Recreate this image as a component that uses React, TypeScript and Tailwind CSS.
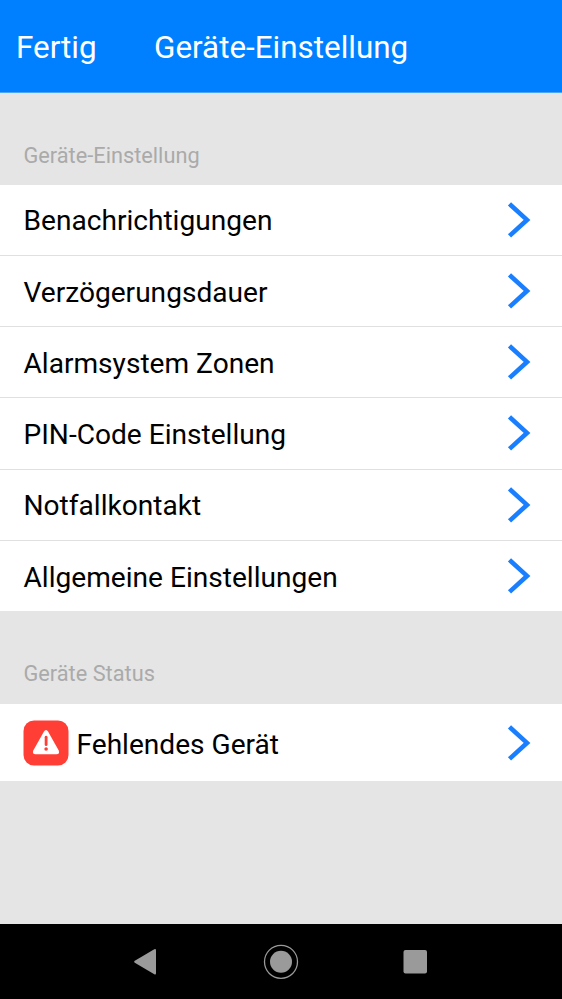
const settings = [
  "Benachrichtigungen",
  "Verzögerungsdauer",
  "Alarmsystem Zonen",
  "PIN-Code Einstellung",
  "Notfallkontakt",
  "Allgemeine Einstellungen",
];

function Chevron() {
  return (
    <svg viewBox="0 0 24 38" className="w-6 h-[38px] shrink-0" fill="none" stroke="#197fff" strokeWidth="4.6">
      <path d="M2.5 2.9 L20 18.9 L2.5 34.9" />
    </svg>
  );
}

function WarningIcon() {
  return (
    <svg viewBox="0 0 46 46" className="w-[46px] h-[46px] shrink-0">
      <rect x="0.5" y="0.5" width="45" height="45" rx="10.5" fill="#ff3f36" />
      <path
        d="M20.8 11.8 Q23 8.4 25.2 11.8 L35.6 30.2 Q37.2 34.2 33.4 34.2 H12.6 Q8.8 34.2 10.4 30.2 Z"
        fill="#fff"
      />
      <path d="M23.1 17.2 V24.7" stroke="#ff3f36" strokeWidth="2.8" strokeLinecap="round" />
      <circle cx="23.1" cy="29" r="1.8" fill="#ff3f36" />
    </svg>
  );
}

export default function App() {
  return (
    <div className="flex flex-col w-full h-[999px] bg-[#e5e5e5] font-['Roboto',sans-serif] overflow-hidden">
      <header className="flex items-center h-[93px] pt-[4px] pl-4 bg-[#0080ff] border-b border-[#4da5f8] text-white text-[31.4px] leading-none shrink-0">
        <button className="w-[138px] text-left">Fertig</button>
        <h1>Geräte-Einstellung</h1>
      </header>

      <main className="flex-1">
        <h2 className="h-[91.5px] pt-[48.5px] pl-[23.5px] text-[21.75px] leading-[28px] text-[#aaaaaa]">Geräte-Einstellung</h2>
        <ul className="bg-white h-[426.5px]">
          {settings.map((label) => (
            <li
              key={label}
              className="flex items-center justify-between h-[71.25px] pl-[23.5px] pr-[31px] border-b border-[#e0e0e0] last:border-b-0 text-[28.1px] leading-none text-black"
            >
              <span className="pt-[3.5px]">{label}</span>
              <Chevron />
            </li>
          ))}
        </ul>

        <h2 className="h-[93px] pt-[49px] pl-[23.5px] text-[21.75px] leading-[28px] text-[#aaaaaa]">Geräte Status</h2>
        <div className="flex items-center h-[77px] pl-[23px] pr-[31px] bg-white text-[28.1px] leading-none text-black">
          <WarningIcon />
          <span className="flex-1 pt-[5px] pl-[7.5px]">Fehlendes Gerät</span>
          <Chevron />
        </div>
      </main>

      <nav className="flex items-center justify-center h-[75px] bg-black shrink-0">
        <svg viewBox="0 0 296 36" className="w-[296px] h-9" fill="#9a9a9a">
          <path d="M1.8 16.8 L21.3 5.3 Q23 4.6 23 6.4 V29.2 Q23 31 21.3 30.2 L1.8 18.8 Q0.2 17.8 1.8 16.8 Z" />
          <circle cx="148" cy="17.8" r="11" />
          <circle cx="148" cy="17.8" r="16.5" fill="none" stroke="#9a9a9a" strokeWidth="1.3" />
          <rect x="270.5" y="6" width="23.5" height="23.5" rx="2" />
        </svg>
      </nav>
    </div>
  );
}
